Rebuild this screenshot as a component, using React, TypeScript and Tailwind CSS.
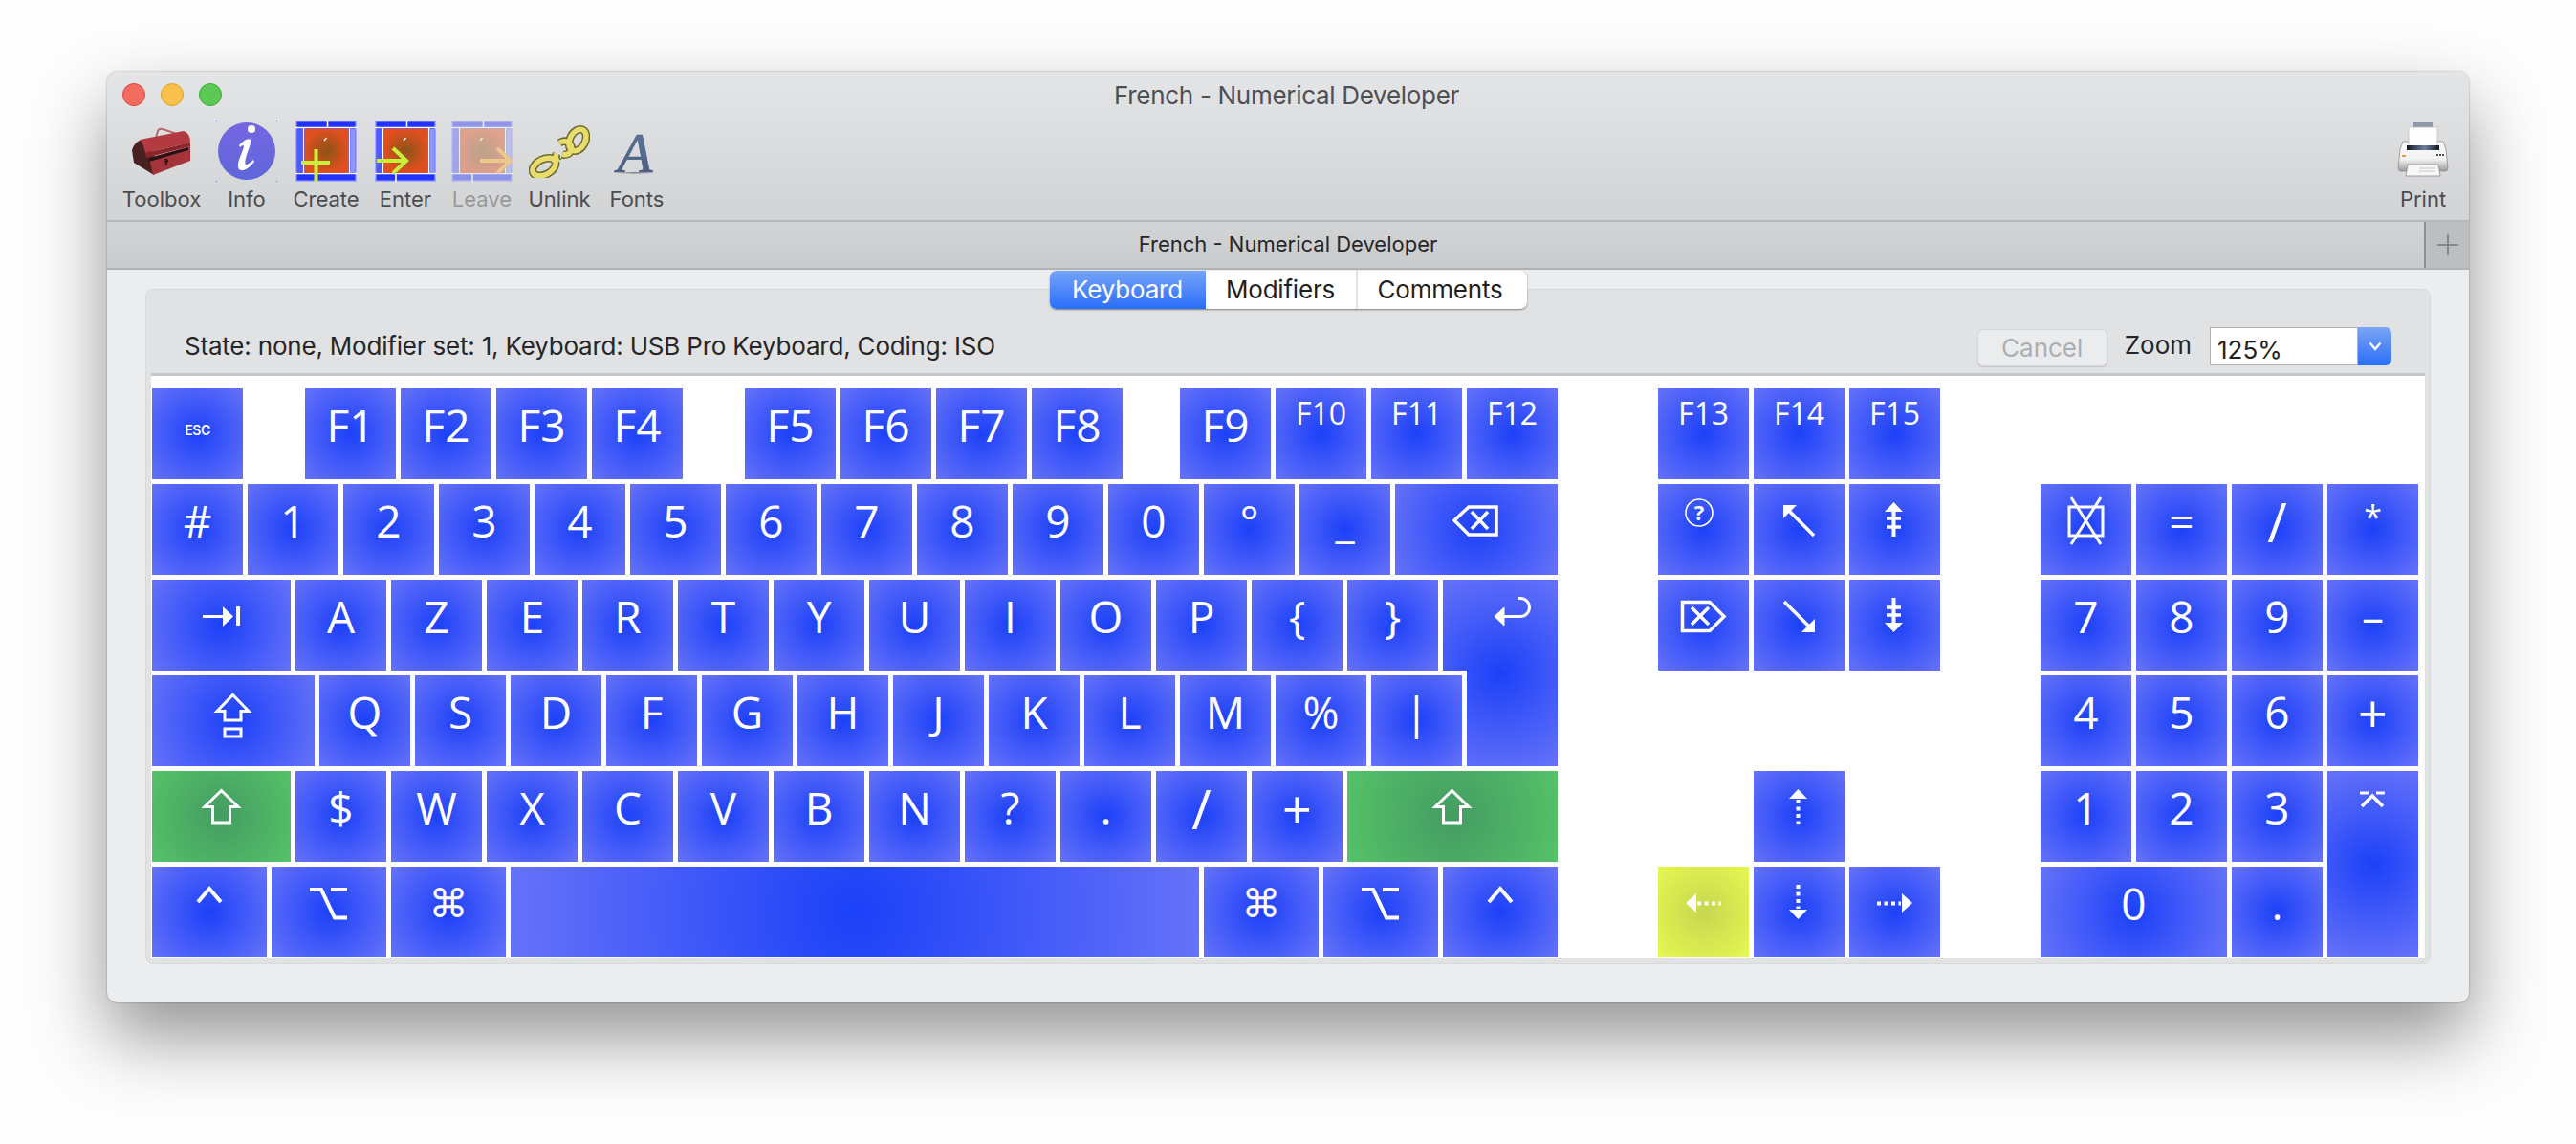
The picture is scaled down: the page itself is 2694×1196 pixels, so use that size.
import React from "react";

type KeyDef = {
  x: number;
  w: number;
  row: number;
  rows?: number;
  label?: string;
  size?: "lg" | "md";
  color?: "blue" | "green" | "yellow";
  icon?: React.ReactNode;
  cut?: boolean;
  esc?: boolean;
  cmd?: boolean;
};

const S = (p: { children: React.ReactNode; w: number; h?: number }) => (
  <svg
    width={p.w}
    height={p.h ?? 95}
    viewBox={`0 0 ${p.w} ${p.h ?? 95}`}
    fill="none"
    stroke="#fff"
    className="block"
  >
    {p.children}
  </svg>
);

const shiftArrow = (o: number) => (
  <path
    d={`M${o + 18.5} 20.5 L${o + 36} 37.5 H${o + 27.5} V54 H${o + 9.5} V37.5 H${o + 1} Z`}
    strokeWidth="3"
  />
);

const row = (labels: string[], startX: number, r: number, w = 95, pitch = 100, size: "lg" | "md" = "lg"): KeyDef[] =>
  labels.map((label, i) => ({ x: startX + i * pitch, w, row: r, label, size }));

const KEYS: KeyDef[] = [
  { x: 159, w: 95, row: 1, label: "ESC", esc: true },
  ...row(["F1", "F2", "F3", "F4"], 319, 1),
  ...row(["F5", "F6", "F7", "F8"], 779, 1),
  { x: 1234, w: 95, row: 1, label: "F9" },
  ...row(["F10", "F11", "F12"], 1334, 1, 95, 100, "md"),
  ...row(["F13", "F14", "F15"], 1734, 1, 95, 100, "md"),

  ...row(["#", "1", "2", "3", "4", "5", "6", "7", "8", "9", "0", "°", "_"], 159, 2),
  {
    x: 1459,
    w: 170,
    row: 2,
    icon: (
      <S w={170}>
        <path d="M62 38 L77 24 H106 V53 H77 Z" strokeWidth="3.5" />
        <path d="M80 29 L97 47 M97 29 L80 47" strokeWidth="3.5" />
      </S>
    ),
  },
  {
    x: 1734,
    w: 95,
    row: 2,
    icon: (
      <S w={95}>
        <circle cx="43" cy="30" r="14" strokeWidth="1.6" />
        <text x="43" y="38" textAnchor="middle" fill="#fff" stroke="none" fontSize="22" fontWeight="700" fontFamily="Open Sans, sans-serif">
          ?
        </text>
      </S>
    ),
  },
  {
    x: 1834,
    w: 95,
    row: 2,
    icon: (
      <S w={95}>
        <path d="M31 22 H45 L31 36 Z" fill="#fff" stroke="none" />
        <path d="M36 27 L63 54" strokeWidth="3.5" />
      </S>
    ),
  },
  {
    x: 1934,
    w: 95,
    row: 2,
    icon: (
      <S w={95}>
        <path d="M46.5 19 L56 29 H37 Z" fill="#fff" stroke="none" />
        <path d="M46.5 28 V55" strokeWidth="4" />
        <path d="M39 36 H54 M39 45 H54" strokeWidth="3.5" />
      </S>
    ),
  },
  {
    x: 2134,
    w: 95,
    row: 2,
    icon: (
      <S w={95}>
        <rect x="30" y="24" width="35" height="30" strokeWidth="3" />
        <path d="M32 14 L63 63 M63 14 L32 63" strokeWidth="3" />
      </S>
    ),
  },
  ...row(["=", "/", "*"], 2234, 2),

  {
    x: 159,
    w: 145,
    row: 3,
    icon: (
      <S w={145}>
        <path d="M53 38.5 H76" strokeWidth="3" />
        <path d="M74 28 L85 38.5 L74 49 Z" fill="#fff" stroke="none" />
        <path d="M90 28 V48" strokeWidth="4" />
      </S>
    ),
  },
  ...row(["A", "Z", "E", "R", "T", "Y", "U", "I", "O", "P", "{", "}"], 309, 3),
  {
    x: 1509,
    w: 120,
    row: 3,
    rows: 2,
    cut: true,
    icon: (
      <S w={120} h={195}>
        <path d="M54 38.5 L64 29 V48 Z" fill="#fff" stroke="#fff" strokeWidth="1" />
        <path d="M63 38.5 H81 A9.5 9.5 0 0 0 81 19.5 H79" strokeWidth="3" />
      </S>
    ),
  },
  {
    x: 1734,
    w: 95,
    row: 3,
    icon: (
      <S w={95}>
        <path d="M25.5 23.5 H54 L69 38.5 L54 53.5 H25.5 Z" strokeWidth="3.5" />
        <path d="M35 29 L53 47 M53 29 L35 47" strokeWidth="3.5" />
      </S>
    ),
  },
  {
    x: 1834,
    w: 95,
    row: 3,
    icon: (
      <S w={95}>
        <path d="M64 55 H50 L64 41 Z" fill="#fff" stroke="none" />
        <path d="M32 23 L59 50" strokeWidth="3.5" />
      </S>
    ),
  },
  {
    x: 1934,
    w: 95,
    row: 3,
    icon: (
      <S w={95}>
        <path d="M46.5 55 L56 45 H37 Z" fill="#fff" stroke="none" />
        <path d="M46.5 19 V46" strokeWidth="4" />
        <path d="M39 29 H54 M39 37 H54" strokeWidth="3.5" />
      </S>
    ),
  },
  ...row(["7", "8", "9", "–"], 2134, 3),

  {
    x: 159,
    w: 170,
    row: 4,
    icon: (
      <S w={170}>
        <path d="M84.5 20.5 L101 37.5 H93 V47 H76 V37.5 H68 Z" strokeWidth="3" />
        <rect x="76" y="56" width="17" height="8" strokeWidth="3" />
      </S>
    ),
  },
  ...row(["Q", "S", "D", "F", "G", "H", "J", "K", "L", "M", "%", "|"], 334, 4),
  ...row(["4", "5", "6", "+"], 2134, 4),

  { x: 159, w: 145, row: 5, color: "green", icon: <S w={145}>{shiftArrow(54)}</S> },
  ...row(["$", "W", "X", "C", "V", "B", "N", "?", ".", "/", "+"], 309, 5),
  { x: 1409, w: 220, row: 5, color: "green", icon: <S w={220}>{shiftArrow(91)}</S> },
  {
    x: 1834,
    w: 95,
    row: 5,
    icon: (
      <S w={95}>
        <path d="M46.5 19 L56 29 H37 Z" fill="#fff" stroke="none" />
        <path d="M46.5 30 V55" strokeWidth="4" strokeDasharray="4 3.5" />
      </S>
    ),
  },
  ...row(["1", "2", "3"], 2134, 5),
  {
    x: 2434,
    w: 95,
    row: 5,
    rows: 2,
    icon: (
      <S w={95} h={195}>
        <path d="M34 23 H43 M51 23 H60" strokeWidth="3" />
        <path d="M36 37 L47 26 L58 37" strokeWidth="3.5" />
      </S>
    ),
  },

  {
    x: 159,
    w: 120,
    row: 6,
    icon: (
      <S w={120}>
        <path d="M48 37 L60 23 L72 37" strokeWidth="4" />
      </S>
    ),
  },
  {
    x: 284,
    w: 120,
    row: 6,
    icon: (
      <S w={120}>
        <path d="M40 24 H52 L66 53.5 H79 M62 24 H79" strokeWidth="4" />
      </S>
    ),
  },
  { x: 409, w: 120, row: 6, label: "⌘", cmd: true },
  { x: 534, w: 720, row: 6 },
  { x: 1259, w: 120, row: 6, label: "⌘", cmd: true },
  {
    x: 1384,
    w: 120,
    row: 6,
    icon: (
      <S w={120}>
        <path d="M40 24 H52 L66 53.5 H79 M62 24 H79" strokeWidth="4" />
      </S>
    ),
  },
  {
    x: 1509,
    w: 120,
    row: 6,
    icon: (
      <S w={120}>
        <path d="M48 37 L60 23 L72 37" strokeWidth="4" />
      </S>
    ),
  },
  {
    x: 1734,
    w: 95,
    row: 6,
    color: "yellow",
    icon: (
      <S w={95}>
        <path d="M29 38 L40 28 V48 Z" fill="#fff" stroke="none" />
        <path d="M41 38.5 H66" strokeWidth="4" strokeDasharray="4 3.5" />
      </S>
    ),
  },
  {
    x: 1834,
    w: 95,
    row: 6,
    icon: (
      <S w={95}>
        <path d="M46.5 55 L56 45 H37 Z" fill="#fff" stroke="none" />
        <path d="M46.5 19 V44" strokeWidth="4" strokeDasharray="4 3.5" />
      </S>
    ),
  },
  {
    x: 1934,
    w: 95,
    row: 6,
    icon: (
      <S w={95}>
        <path d="M66 38 L55 28 V48 Z" fill="#fff" stroke="none" />
        <path d="M29 38.5 H54" strokeWidth="4" strokeDasharray="4 3.5" />
      </S>
    ),
  },
  { x: 2134, w: 195, row: 6, label: "0" },
  { x: 2334, w: 95, row: 6, label: "." },
];

const LABEL_SIZE: Record<string, string> = {
  "+": "pt-[12px] text-[54px] leading-[54px]",
  "/": "pt-[11px] text-[56px] leading-[56px]",
  "*": "pt-[17px] text-[34px] leading-[34px]",
};

function Key({ k }: { k: KeyDef }) {
  const bg =
    k.color === "green"
      ? "bg-[radial-gradient(circle_at_center,#449c62_0%,#55c268_100%)]"
      : k.color === "yellow"
        ? "bg-[radial-gradient(circle_at_center,#c6d650_0%,#e6f850_100%)]"
        : "bg-[radial-gradient(circle_at_center,#1c41f8_0%,#6672f9_100%)]";
  return (
    <div
      className={`${bg} ${k.cut ? "[clip-path:polygon(0_0,100%_0,100%_100%,25px_100%,25px_95px,0_95px)]" : ""} flex justify-center overflow-hidden text-white`}
      style={{
        gridColumn: `${(k.x - 159) / 5 + 1} / span ${k.w / 5}`,
        gridRow: `${k.row} / span ${k.rows ?? 1}`,
      }}
    >
      {k.icon ? (
        k.icon
      ) : k.esc ? (
        <span className="pt-[35px] text-[14px] leading-[18px] font-semibold tracking-[-0.4px] [font-family:Inter,sans-serif]">{k.label}</span>
      ) : k.cmd ? (
        <span className="pt-[17px] text-[41px] leading-[44px] [font-family:'DejaVu_Sans',sans-serif]">{k.label}</span>
      ) : k.size === "md" ? (
        <span className="pt-[10px] text-[32px] leading-[32px] font-medium [font-family:'Open_Sans',sans-serif]">{k.label}</span>
      ) : k.label ? (
        <span className={`${LABEL_SIZE[k.label] ?? "pt-[15px] text-[46px] leading-[46px]"} font-medium [font-family:'Open_Sans',sans-serif]`}>
          {k.label}
        </span>
      ) : null}
    </div>
  );
}

function Grid64({ opacity, children, id }: { opacity?: number; children: React.ReactNode; id: string }) {
  return (
    <svg width="64" height="64" viewBox="0 0 64 64" className="block">
      <defs>
        <radialGradient id={id}>
          <stop offset="0" stopColor="#8d5316" />
          <stop offset="1" stopColor="#e14f1f" />
        </radialGradient>
      </defs>
      <g opacity={opacity ?? 1}>
        <rect x="0" y="0" width="64" height="64" fill="#a5aafc" />
        <rect x="1.5" y="1.5" width="61" height="61" fill="#2433fb" />
        <path d="M0 7.5 H64 M0 55.5 H64 M8.5 7 V56 M56.5 7 V56 M33.5 0 V7 M22 56 V64" stroke="#fff" strokeWidth="1.6" />
        <rect x="2" y="9" width="5.5" height="46" fill="#4f5aff" />
        <rect x="57.5" y="9" width="5" height="46" fill="#8f97ff" />
        <rect x="9.5" y="8.5" width="46" height="46.5" fill={`url(#${id})`} />
        <path d="M30 21 L32.5 18" stroke="#fff" strokeWidth="1.4" />
      </g>
      {children}
    </svg>
  );
}

const Toolbox = () => (
  <svg width="64" height="52" viewBox="0 0 64 52" className="block">
    <path d="M26 12 L28 5 Q29 2 33 3 L45 7 Q48 8 47 12" fill="none" stroke="#b56a68" strokeWidth="2" />
    <path d="M1 25 Q3 17 11 14 L19 20 L26 35 L24 51 L3 38 Z" fill="#4a1f20" />
    <path d="M9 14 L55 5 Q62 7 62 17 L15 28 Q13 18 9 14 Z" fill="#b33a40" />
    <path d="M15 28 L62 17 V21 L16 33 Z" fill="#8a262b" />
    <path d="M19 33 L62 21 V36 L23 51 Z" fill="#a5343a" />
    <path d="M19 33 L60 22 L60 25 L19 37 Z" fill="#2a1214" />
    <circle cx="37" cy="36" r="2.2" fill="#3a1517" />
    <path d="M37 36 V41" stroke="#3a1517" strokeWidth="1.6" />
  </svg>
);

const Info = () => (
  <svg width="64" height="64" viewBox="0 0 64 64" className="block">
    <defs>
      <linearGradient id="ig" x1="0" y1="0" x2="0" y2="1">
        <stop offset="0" stopColor="#7567e2" />
        <stop offset="1" stopColor="#5f66d9" />
      </linearGradient>
    </defs>
    <circle cx="32" cy="32" r="30" fill="url(#ig)" />
    <circle cx="37" cy="9" r="4" fill="#fff" />
    <path d="M24 26 Q32 17 36 20 Q37 23 33 33 Q29 44 31 46 Q33 47 39 41 L40 43 Q32 53 26 52 Q21 51 24 41 L29 28 Q29 24 25 28 Z" fill="#fff" />
    <g fill="#5c5cd8">
      <rect x="0" y="0" width="1" height="1" />
      <rect x="63" y="0" width="1" height="1" />
      <rect x="0" y="63" width="1" height="1" />
      <rect x="63" y="63" width="1" height="1" />
    </g>
  </svg>
);

const chainParts = [
  <ellipse key="a" cx="16" cy="43" rx="13" ry="8" transform="rotate(-28 16 43)" />,
  <ellipse key="b" cx="51" cy="15" rx="12" ry="8" transform="rotate(-62 51 15)" />,
  <path key="c" d="M31 38 Q27 34 29 29" />,
  <path key="d" d="M32 18 Q38 14 43 19 Q47 24 42 29 Q38 31 35 30" />,
];

const Unlink = () => (
  <svg width="64" height="56" viewBox="0 -1.5 64 56" fill="none" className="block">
    <g stroke="#6e6a2c" strokeWidth="8.5">{chainParts}</g>
    <g stroke="#e8dc6c" strokeWidth="5.5">{chainParts}</g>
  </svg>
);

const FontsIcon = () => (
  <svg width="62" height="72" viewBox="0 0 62 72" className="block">
    <defs>
      <linearGradient id="fg" x1="0" y1="0" x2="0" y2="1">
        <stop offset="0" stopColor="#62789c" />
        <stop offset="1" stopColor="#46597c" />
      </linearGradient>
      <linearGradient id="fl" x1="0" y1="0" x2="1" y2="0">
        <stop offset="0" stopColor="#8a8c90" stopOpacity="0" />
        <stop offset="0.5" stopColor="#777a80" />
        <stop offset="1" stopColor="#8a8c90" stopOpacity="0" />
      </linearGradient>
    </defs>
    <text
      x="29"
      y="58"
      textAnchor="middle"
      fontSize="60"
      fontStyle="italic"
      fontFamily="Liberation Serif, serif"
      fill="url(#fg)"
      stroke="#4f6388"
      strokeWidth="0.7"
    >
      A
    </text>
    <rect x="7" y="58" width="44" height="1.5" fill="url(#fl)" />
  </svg>
);

const Printer = () => (
  <svg width="60" height="60" viewBox="0 0 60 60" className="block">
    <defs>
      <linearGradient id="pb" x1="0" y1="0" x2="0" y2="1">
        <stop offset="0" stopColor="#fbfbfb" />
        <stop offset="0.6" stopColor="#f1f1f1" />
        <stop offset="1" stopColor="#9a9a9c" />
      </linearGradient>
      <linearGradient id="ps" x1="0" y1="0" x2="1" y2="0">
        <stop offset="0" stopColor="#14161f" />
        <stop offset="0.55" stopColor="#6d7fa3" />
        <stop offset="1" stopColor="#14161f" />
      </linearGradient>
    </defs>
    <rect x="20" y="0" width="20" height="7" fill="#8f97ab" />
    <path d="M6 28 L9 20 H51 L54 28 L56 48 Q56 51 53 51 H7 Q4 51 4 48 Z" fill="url(#pb)" stroke="#8d8e90" strokeWidth="0.8" />
    <rect x="15" y="5" width="30" height="20" fill="#fdfdfd" stroke="#b9b9bb" strokeWidth="0.6" />
    <rect x="13" y="24" width="34" height="5" fill="url(#ps)" />
    <rect x="8" y="34" width="4" height="2" fill="#e09a4b" />
    <path d="M44 34 H52" stroke="#55565a" strokeWidth="2" strokeDasharray="2 1" />
    <path d="M14 44 H46 L48 56 H12 Z" fill="#f7f7f7" stroke="#8d8e90" strokeWidth="0.8" />
    <path d="M26 48 H43 M26 51 H43" stroke="#c3c4c6" strokeWidth="1" />
  </svg>
);

function Tool({ w, label, dim, children }: { w: string; label: string; dim?: boolean; children: React.ReactNode }) {
  return (
    <div className={`${w} flex flex-col items-center`}>
      <div className="flex h-[64px] items-center justify-center">{children}</div>
      <span className={`mt-[4px] text-[22px] leading-[28px] ${dim ? "text-[#98999b]" : "text-[#4b4c4e]"}`}>{label}</span>
    </div>
  );
}

export default function App() {
  return (
    <div className="h-[1196px] w-[2694px] overflow-hidden bg-[#fdfdfe] pt-[75px] pl-[112px] [font-family:Inter,'Liberation_Sans',sans-serif]">
      <div className="flex h-[973px] w-[2470px] flex-col overflow-hidden rounded-[10px] bg-[#ecedef] shadow-[0_36px_76px_rgba(0,0,0,0.42),0_0_2px_rgba(0,0,0,0.4)]">
        <div className="h-[157px] shrink-0 border-b-2 border-[#b6b7b9] bg-[linear-gradient(#e4e5e7,#d2d3d5)]">
          <div className="relative flex h-[46px] items-center">
            <div className="flex gap-[16px] pt-[2px] pl-[16px]">
              <span className="h-[24px] w-[24px] rounded-full border border-[#e0443e] bg-[#f26d60]" />
              <span className="h-[24px] w-[24px] rounded-full border border-[#dea123] bg-[#f8c04c]" />
              <span className="h-[24px] w-[24px] rounded-full border border-[#3cab35] bg-[#5cc855]" />
            </div>
            <span className="absolute inset-x-0 top-[9px] pr-[3px] text-center text-[26px] leading-[32px] tracking-[-0.3px] text-[#4f4f51]">
              French - Numerical Developer
            </span>
          </div>
          <div className="flex justify-between pt-[5px] pl-[17px] pr-[18px]">
            <div className="flex">
              <Tool w="w-[80px]" label="Toolbox">
                <Toolbox />
              </Tool>
              <Tool w="w-[98px]" label="Info">
                <Info />
              </Tool>
              <Tool w="w-[68px]" label="Create">
                <Grid64 id="g1">
                  <path d="M21.5 30 V64 M6 44 H36" stroke="#c8f03a" strokeWidth="4" />
                </Grid64>
              </Tool>
              <Tool w="w-[98px]" label="Enter">
                <Grid64 id="g2">
                  <path d="M2 42 H32 M19 29 L33 42 L19 55" stroke="#c8f03a" strokeWidth="4" fill="none" />
                </Grid64>
              </Tool>
              <Tool w="w-[62px]" label="Leave" dim>
                <Grid64 id="g3" opacity={0.42}>
                  <path d="M30 42 H62 M48 29 L62 42 L48 55" stroke="#ecc88c" strokeWidth="4" fill="none" />
                </Grid64>
              </Tool>
              <Tool w="w-[100px]" label="Unlink">
                <Unlink />
              </Tool>
              <Tool w="w-[62px]" label="Fonts">
                <FontsIcon />
              </Tool>
            </div>
            <Tool w="w-[60px]" label="Print">
              <Printer />
            </Tool>
          </div>
        </div>
        <div className="flex h-[50px] shrink-0 border-b-2 border-[#b1b2b4] bg-[linear-gradient(#d3d4d6,#c9cacc)]">
          <div className="flex-1 pl-[47px] text-center text-[22px] leading-[46px] text-[#262628]">French - Numerical Developer</div>
          <div className="flex w-[47px] items-center justify-center border-l-2 border-[#8f9092] bg-[#bdbec0]">
            <svg width="24" height="24" viewBox="0 0 24 24">
              <path d="M12 1 V23 M1 12 H23" stroke="#87888a" strokeWidth="2" />
            </svg>
          </div>
        </div>
        <div className="flex flex-1 flex-col px-[40px] pt-[20px] pb-[40px]">
          <div className="flex flex-1 flex-col rounded-[8px] border border-[#d8d9db] bg-[#e1e2e4] px-[5px] pb-[5px]">
            <div className="-mt-[20px] flex justify-center">
              <div className="flex h-[40px] overflow-hidden rounded-[7px] bg-white text-[26px] leading-[40px] tracking-[-0.2px] shadow-[0_1px_2px_rgba(0,0,0,0.45)]">
                <span className="w-[163px] bg-[linear-gradient(#76a3fb,#2a6ef9)] text-center text-white">Keyboard</span>
                <span className="w-[159px] border-r-2 border-[#e2e2e2] text-center text-[#1f1f21]">Modifiers</span>
                <span className="w-[177px] pr-[4px] text-center text-[#1f1f21]">Comments</span>
              </div>
            </div>
            <div className="flex h-[67px] shrink-0 items-start">
              <span className="flex-1 pt-[23px] pl-[35px] text-[26px] leading-[32px] tracking-[-0.2px] text-[#262628]">
                State: none, Modifier set: 1, Keyboard: USB Pro Keyboard, Coding: ISO
              </span>
              <span className="mt-[21px] h-[39px] w-[136px] rounded-[6px] border border-[#d5d6d8] bg-[#ebecee] text-center text-[26px] leading-[38px] text-[#adaeb0] shadow-[0_1px_1px_rgba(0,0,0,0.12)]">
                Cancel
              </span>
              <span className="mt-[20px] ml-[18px] text-[26px] leading-[36px] text-[#262628]">Zoom</span>
              <div className="mt-[19px] ml-[19px] flex h-[40px] w-[190px]">
                <span className="w-[155px] border border-[#b2b2b4] bg-white pl-[7px] text-[26px] leading-[46px] text-[#1f1f21]">125%</span>
                <span className="flex w-[35px] items-center justify-center rounded-r-[6px] bg-[linear-gradient(#7ba5f5,#2a6ef9)]">
                  <svg width="16" height="12" viewBox="0 0 16 12" fill="none">
                    <path d="M2.5 2.5 L8 9 L13.5 2.5" stroke="#fff" strokeWidth="2.4" />
                  </svg>
                </span>
              </div>
              <div className="w-[35px]" />
            </div>
            <div className="flex-1 border-t-[3px] border-[#c5c6c8] bg-white pt-[13px] pl-px">
              <div className="grid grid-cols-[repeat(474,5px)] grid-rows-[repeat(6,95px)] gap-y-[5px]">
                {KEYS.map((k) => (
                  <Key key={`${k.x}-${k.row}`} k={k} />
                ))}
              </div>
            </div>
          </div>
        </div>
      </div>
    </div>
  );
}
